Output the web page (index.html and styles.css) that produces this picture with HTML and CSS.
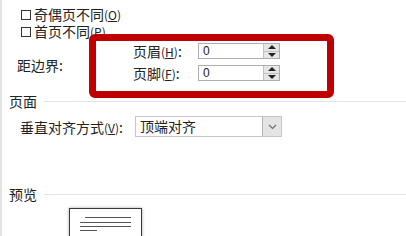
FILE: index.html
```html
<!DOCTYPE html>
<html>
<head>
    <meta charset="utf-8">
    <title>页面设置</title>
    <link rel="stylesheet" href="styles.css">
</head>
<body>
    <div class="dialog">
        <div class="check-row first">
            <span class="checkbox"></span>
            <span>奇偶页不同<span class="key">(<u>O</u>)</span></span>
        </div>
        <div class="check-row">
            <span class="checkbox"></span>
            <span>首页不同<span class="key">(<u>P</u>)</span></span>
        </div>

        <div class="margins">
            <div class="margin-label">距边界:</div>
            <div class="fields">
                <div class="field-label">页眉<span class="key">(<u>H</u>)</span>:</div>
                <div class="spin-field">
                    <span class="spin-value">0</span>
                    <span class="spin">
                        <span class="spin-btn"><i class="arrow-up"></i></span>
                        <span class="spin-btn"><i class="arrow-down"></i></span>
                    </span>
                </div>
                <div class="field-label">页脚<span class="key">(<u>F</u>)</span>:</div>
                <div class="spin-field">
                    <span class="spin-value">0</span>
                    <span class="spin">
                        <span class="spin-btn"><i class="arrow-up"></i></span>
                        <span class="spin-btn"><i class="arrow-down"></i></span>
                    </span>
                </div>
            </div>
        </div>

        <div class="section page-section">
            <span>页面</span>
            <span class="section-line"></span>
        </div>
        <div class="align-row">
            <div class="align-label">垂直对齐方式<span class="key">(<u>V</u>)</span>:</div>
            <div class="select">
                <span class="select-value">顶端对齐</span>
                <span class="select-btn">
                    <svg width="9" height="6" viewBox="0 0 9 6"><polyline points="1,1 4.5,4.5 8,1" fill="none" stroke="#6d6d6d" stroke-width="1.2"/></svg>
                </span>
            </div>
        </div>

        <div class="section preview-section">
            <span>预览</span>
            <span class="section-line"></span>
        </div>
        <div class="preview-page">
            <div class="pline l1"></div>
            <div class="pline l2"></div>
            <div class="pline l3"></div>
            <div class="pline l4"></div>
        </div>
    </div>

    <!-- red highlight drawn over the header/footer fields -->
    <div class="highlight"></div>
</body>
</html>
```

FILE: styles.css
```css
html, body {
    margin: 0;
    padding: 0;
}

body {
    position: relative;
    width: 406px;
    height: 236px;
    overflow: hidden;
    background: #ffffff;
    font-family: "Noto Sans CJK SC", "Liberation Sans", sans-serif;
    font-size: 14px;
    color: #222222;
}

.dialog {
    height: 236px;
    box-sizing: border-box;
    border-left: 2px solid #e4e4e4;
    overflow: hidden;
}

.key {
    font-size: 12px;
}

.check-row {
    display: flex;
    align-items: center;
    height: 17px;
    padding-left: 19px;
    line-height: 16px;
}

.check-row.first {
    padding-top: 6px;
}

.checkbox {
    width: 10px;
    height: 10px;
    box-sizing: border-box;
    border: 1px solid #333333;
    margin-right: 3px;
}

.margins {
    display: flex;
    padding-left: 15px;
    margin-top: 3px;
}

.margin-label {
    width: 116px;
    align-self: center;
    padding-top: 6px;
}

.fields {
    display: grid;
    grid-template-columns: 65px 82px;
    row-gap: 6px;
    align-items: center;
}

.field-label {
    height: 16px;
    line-height: 16px;
}

.spin-field {
    display: flex;
    height: 16px;
    box-sizing: border-box;
    border: 1px solid #abadb3;
    background: #ffffff;
}

.spin-value {
    flex: 1;
    padding-left: 4px;
    font-family: "Liberation Sans", sans-serif;
    font-size: 12px;
    line-height: 14px;
}

.spin {
    width: 15px;
    display: flex;
    flex-direction: column;
    border-left: 1px solid #c2c2c2;
    background: #e6e6e6;
}

.spin-btn {
    flex: 1;
    display: flex;
    align-items: center;
    justify-content: center;
}

.spin-btn + .spin-btn {
    border-top: 1px solid #c2c2c2;
}

.arrow-up {
    width: 0;
    height: 0;
    border-left: 4px solid transparent;
    border-right: 4px solid transparent;
    border-bottom: 4px solid #222222;
}

.arrow-down {
    width: 0;
    height: 0;
    border-left: 4px solid transparent;
    border-right: 4px solid transparent;
    border-top: 4px solid #222222;
}

.section {
    display: flex;
    align-items: center;
    gap: 7px;
    height: 15px;
    line-height: 15px;
    padding-left: 7px;
}

.section-line {
    flex: 1;
    height: 1px;
    background: #e3e3e3;
}

.page-section {
    margin-top: 13px;
}

.align-row {
    display: flex;
    align-items: center;
    height: 21px;
    margin-top: 7px;
    padding-left: 18px;
}

.align-label {
    width: 115px;
}

.select {
    display: flex;
    width: 147px;
    height: 21px;
    box-sizing: border-box;
    border: 1px solid #c6c6c6;
    background: #ffffff;
}

.select-value {
    flex: 1;
    padding-left: 4px;
    line-height: 19px;
}

.select-btn {
    width: 18px;
    display: flex;
    align-items: center;
    justify-content: center;
    background: #e4e4e4;
    border-left: 1px solid #b4b4b4;
}

.preview-section {
    margin-top: 50px;
}

.preview-page {
    width: 73px;
    height: 30px;
    box-sizing: border-box;
    margin-top: 6px;
    margin-left: 67px;
    padding: 8px 10px 0 10px;
    border: 1px solid #3a3a3a;
    border-bottom: none;
    box-shadow: 0 0 3px rgba(0, 0, 0, 0.35);
    background: #ffffff;
}

.pline {
    height: 1px;
    background: #555555;
}

.l1 { margin-left: 5px; }
.l2 { margin-top: 4px; }
.l3 { margin-top: 3px; }
.l4 { margin-top: 3px; width: 17px; }

.highlight {
    position: absolute;
    left: 89px;
    top: 34px;
    width: 245px;
    height: 64px;
    box-sizing: border-box;
    border: 7px solid #c00000;
    border-radius: 6px;
}
```
